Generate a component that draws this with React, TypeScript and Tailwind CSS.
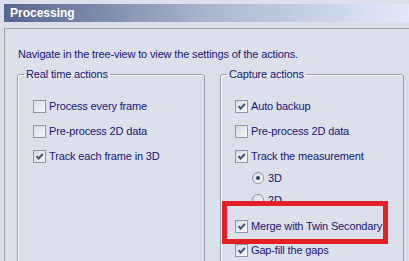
import React from 'react';

const Check = ({ checked }: { checked?: boolean }) => (
  <span className="inline-flex w-[13px] h-[13px] shrink-0 items-center justify-center border border-[#8f98aa] bg-gradient-to-br from-[#d6dae3] to-[#f9f9fb]">
    {checked && (
      <svg width="11" height="11" viewBox="0 0 11 11">
        <path d="M2.5 5.2 L4.6 7.6 L8.8 3" fill="none" stroke="#3f4f78" strokeWidth="1.9" />
      </svg>
    )}
  </span>
);

const Radio = ({ checked }: { checked?: boolean }) => (
  <span className="inline-flex w-[12px] h-[12px] shrink-0 items-center justify-center rounded-full border border-[#8f98aa] bg-gradient-to-br from-[#d6dae3] to-[#f9f9fb]">
    {checked && <span className="w-[4px] h-[4px] rounded-full bg-[#2e3d68]" />}
  </span>
);

const Row = ({ checked, label, className = '' }: { checked?: boolean; label: string; className?: string }) => (
  <div className={`flex items-center gap-[3px] h-[13px] leading-[13px] ${className}`}>
    <Check checked={checked} />
    <span>{label}</span>
  </div>
);

const App = () => {
  return (
    <div className="relative w-[409px] h-[261px] overflow-hidden bg-[#dce0ea] pt-[4px] pl-[4px] font-['Liberation_Sans',Arial,sans-serif] text-[11px] tracking-[-0.15px] text-[#16167a]">
      <div className="h-[18px] flex items-center pl-[6px] bg-gradient-to-r from-[#56668f] via-[#abb6cd] to-[#e3ebfa] text-white font-bold text-[12px] tracking-normal">
        Processing
      </div>

      <div className="mt-[6px] h-[300px] border-t border-l border-[#a4a4a4] pt-[19px] pl-[12px]">
        <p className="ml-[1px] leading-[13px]">Navigate in the tree-view to view the settings of the actions.</p>

        <div className="mt-[7px] flex gap-[15px]">
          <fieldset className="w-[188px] h-[220px] rounded-[3px] border border-[#9aa2b1] shadow-[inset_1px_1px_0_#ffffff]">
            <legend className="ml-[6px] px-[2px] leading-[13px]">Real time actions</legend>
            <div className="pl-[15px] pt-[19px]">
              <Row label="Process every frame" />
              <Row label="Pre-process 2D data" className="mt-[12px]" />
              <Row checked label="Track each frame in 3D" className="mt-[12px]" />
            </div>
          </fieldset>

          <fieldset className="w-[184px] h-[220px] rounded-[3px] border border-[#9aa2b1] shadow-[inset_1px_1px_0_#ffffff]">
            <legend className="ml-[6px] px-[2px] leading-[13px]">Capture actions</legend>
            <div className="pl-[14px] pt-[19px]">
              <Row checked label="Auto backup" />
              <Row label="Pre-process 2D data" className="mt-[12px]" />
              <Row checked label="Track the measurement" className="mt-[12px]" />
              <div className="mt-[9px] ml-[17px] flex items-center gap-[4px] h-[12px] leading-[12px]">
                <Radio checked />
                <span>3D</span>
              </div>
              <div className="mt-[10px] ml-[17px] flex items-center gap-[4px] h-[12px] leading-[12px]">
                <Radio />
                <span>2D</span>
              </div>
              <div className="relative mt-[14px]">
                <Row checked label="Merge with Twin Secondary" />
                <div className="absolute z-10 left-[-13px] top-[-19px] w-[166px] h-[43px] border-[5px] border-[#e31e26]" />
              </div>
              <Row checked label="Gap-fill the gaps" className="mt-[11px]" />
            </div>
          </fieldset>
        </div>
      </div>
    </div>
  );
};

export default App;
